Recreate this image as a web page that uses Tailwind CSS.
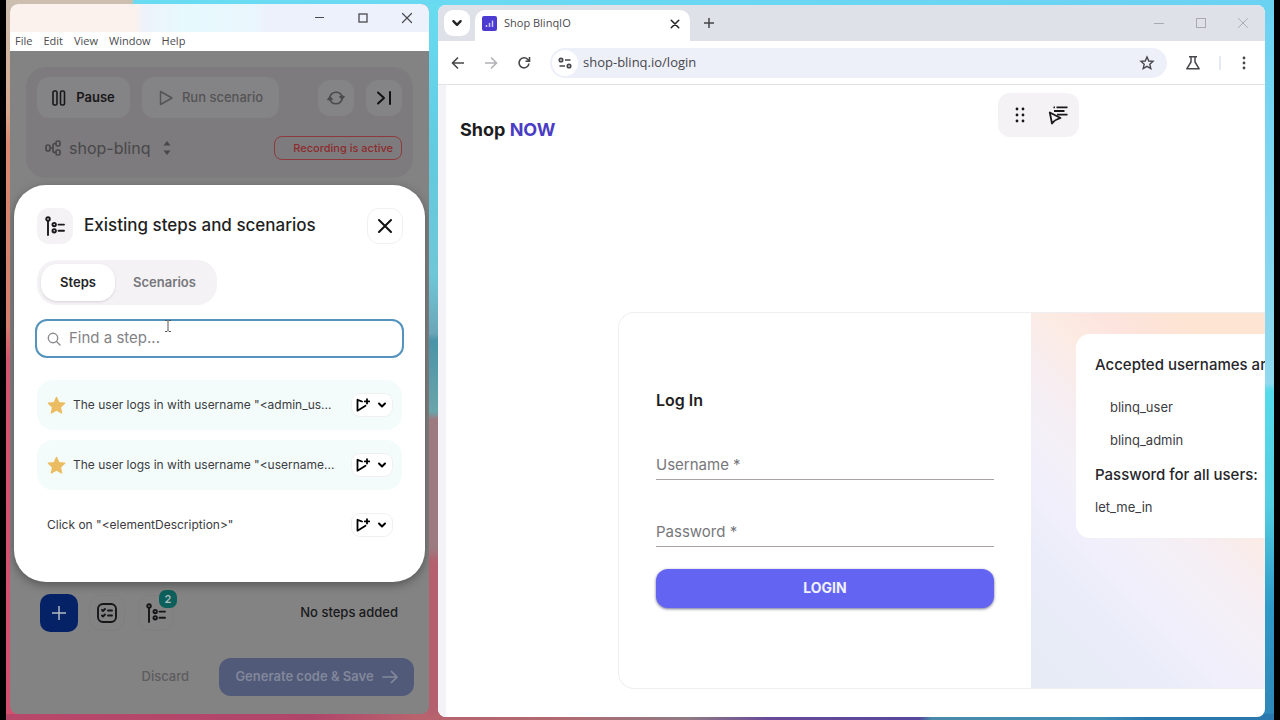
<!DOCTYPE html>
<html lang="en">
<head>
<meta charset="utf-8">
<meta name="viewport" content="width=device-width, initial-scale=1">
<title>Shop BlinqIO</title>
<script src="https://cdn.jsdelivr.net/npm/@tailwindcss/browser@4"></script>
</head>
<body class="bg-black font-['Inter',sans-serif] text-[#1f1f23]">
<svg class="hidden" aria-hidden="true">
  <symbol id="i-steps" viewBox="0 0 20 20" fill="none" stroke="currentColor" stroke-width="1.900" stroke-linecap="round"><circle cx="3" cy="3" r="1.800"/><path d="M3 5v14"/><circle cx="9.200" cy="8.600" r="1.700"/><circle cx="9.200" cy="14.800" r="1.700"/><path d="M13.500 8.600H19M13.500 14.800H19"/></symbol>
  <symbol id="i-runadd" viewBox="0 0 16 16" fill="none" stroke="currentColor" stroke-width="1.800" stroke-linecap="round" stroke-linejoin="round"><path d="M7 4.500 2.500 2.800v10.900L10.500 8.800"/><path d="M12 2.200v4.400M9.800 4.400h4.400"/></symbol>
  <symbol id="i-chev" viewBox="0 0 10 10" fill="none" stroke="currentColor" stroke-width="2" stroke-linecap="round" stroke-linejoin="round"><path d="M2 3.500 5 6.500 8 3.500"/></symbol>
  <symbol id="i-x" viewBox="0 0 16 16" fill="none" stroke="currentColor" stroke-linecap="round"><path d="M2 2l12 12M14 2 2 14"/></symbol>
  <symbol id="i-star" viewBox="0 0 20 20" fill="#ecbc62" stroke="#ecbc62" stroke-width="1.500" stroke-linejoin="round"><path d="M10 1.500l2.500 5.600 6 .6-4.500 4.100 1.300 6L10 14.700 4.700 17.800 6 11.800 1.500 7.700l6-.6z"/></symbol>
</svg>

<main class="relative mx-[6px] flex h-screen min-h-[720px] gap-[9px] overflow-hidden bg-[linear-gradient(to_right,#cdbfb0_0_127px,#69dcf2_127px,#6cd2f2)] pt-1 pr-[9px] pb-[3px] pl-1">
  <!-- Wallpaper visible around the windows -->
  <div class="absolute inset-y-1 left-0 w-10 bg-[linear-gradient(#cdbfb0,#d9a98c_15%,#d98a70_20%,#d5806c_45%,#d5566f_50%,#d5506f)]"></div>
  <div class="absolute top-1 bottom-0 left-[400px] w-12 bg-[linear-gradient(#69dcf2,#62cbe0_20%,#6fc6d6_38%,#6aa6b8_46%,#4a93a8_47%,#6aa5aa_57%,#9c7a80_58%,#9c7a80_76%,#b5606e_78%,#b5606e)]"></div>
  <div class="absolute top-1 right-0 bottom-0 w-10 bg-[linear-gradient(#6cd2f2,#90d8ee_53%,#55dbea_54%,#53cde2_70%,#2f9ac8_84%,#2f86b8)]"></div>
  <div class="absolute inset-x-0 bottom-0 h-1.5 bg-[linear-gradient(to_right,#b8486a,#b0456a_24%,#b8626e_32%,#b06a70_44%,#8f7a84_54%,#6a4a98_60%,#56489c_72%,#4a8aa8_73%,#3f8fb4_86%,#2a78ae_90%)]"></div>

  <!-- Recorder window -->
  <section class="relative mb-[3px] flex w-[419px] shrink-0 flex-col overflow-hidden rounded-lg bg-[#838384]">
    <header class="flex h-7 shrink-0 items-center justify-end gap-8 bg-[linear-gradient(to_right,#fbf2ee_0_30%,#eef2fb_32%,#e6fafe_42%,#eaf6fd_58%,#edf1fb_62%)] pr-4 text-[#4a4a4e]">
      <button aria-label="Minimize"><svg class="size-3" viewBox="0 0 12 12" fill="none" stroke="currentColor"><path d="M2 5.500h9"/></svg></button>
      <button aria-label="Maximize"><svg class="size-3" viewBox="0 0 12 12" fill="none" stroke="currentColor" stroke-width="1.300"><rect x="2" y="2" width="8" height="8"/></svg></button>
      <button aria-label="Close"><svg class="size-3 stroke-[1.6]"><use href="#i-x"/></svg></button>
    </header>
    <nav class="flex h-[19px] shrink-0 items-center gap-[11px] bg-white px-[5px] font-['Open_Sans',sans-serif] text-[11px] text-[#4b4b4f]">
      <button>File</button><button>Edit</button><button>View</button><button>Window</button><button>Help</button>
    </nav>

    <div class="flex grow flex-col px-4 pt-4 pb-[18px]">
      <div class="flex h-[111px] shrink-0 flex-col gap-[17px] rounded-[20px] bg-[#7e7b7e] px-[11px] pt-2.5">
        <div class="flex items-center gap-3">
          <button class="flex h-[41px] w-[93px] items-center justify-center gap-2.5 rounded-xl bg-[#848385] text-[13px] font-semibold text-[#18181a]">
            <svg class="h-4 w-3.5" viewBox="0 0 14 16" fill="none" stroke="currentColor" stroke-width="1.600"><rect x="1" y="1" width="4" height="14" rx="1.500"/><rect x="8.500" y="1" width="4" height="14" rx="1.500"/></svg>Pause</button>
          <button class="flex h-[41px] w-[137px] items-center justify-center gap-2 rounded-xl bg-[#848385] text-[13px] font-medium text-[#545456]">
            <svg class="h-4 w-4" viewBox="0 0 16 16" fill="none" stroke="currentColor" stroke-width="1.500" stroke-linejoin="round"><path d="M2.500 1.500v13L14 8z"/></svg>Run scenario</button>
          <button aria-label="Refresh" class="ml-auto flex size-9 items-center justify-center rounded-xl bg-[#848385] text-[#4b4b4d]">
            <svg class="size-5" viewBox="0 0 20 20" fill="none" stroke="currentColor" stroke-width="1.700" stroke-linecap="round" stroke-linejoin="round"><path d="M4 8.500a6.500 6.500 0 0 1 12-.5M16 11.500a6.500 6.500 0 0 1-12 .5"/><path fill="currentColor" d="M14 8.500h4L16 11zM2 11.500h4L4 9z"/></svg></button>
          <button aria-label="Skip to end" class="flex size-9 items-center justify-center rounded-xl bg-[#848385] text-[#111]">
            <svg class="size-4" viewBox="0 0 16 16" fill="none" stroke="currentColor" stroke-width="2" stroke-linecap="round" stroke-linejoin="round"><path d="M2 2.500 8 8 2 13.500M14 2v12"/></svg></button>
        </div>
        <div class="flex h-[26px] items-center gap-2 pl-2 text-[#48484a]">
          <svg class="size-4" viewBox="0 0 16 16" fill="none" stroke="currentColor" stroke-width="1.700"><rect x="1" y="5" width="4" height="6" rx="2"/><rect x="11" y="1" width="4" height="5" rx="1.500"/><rect x="11" y="10" width="4" height="5" rx="1.500"/><path d="M5 8h3M11 3.500h-1a2 2 0 0 0-2 2v5a2 2 0 0 0 2 2h1"/></svg>
          <button class="flex items-center gap-3 text-base"><span>shop-blinq</span>
            <svg class="h-4 w-2.5" viewBox="0 0 8 16" fill="currentColor"><path d="M4 1l3.500 4.500h-7zM4 15l3.500-4.500h-7z"/></svg></button>
          <span class="ml-auto flex h-6 items-center rounded-lg border border-[#8f3a3a] pr-2 pl-[18px] text-[11px] font-medium text-[#8c2c2c]">Recording is active</span>
        </div>
      </div>

      <div class="mt-auto flex items-center gap-[11px] pl-[14px] pr-[15px]">
        <button aria-label="Add step" class="flex size-[38px] items-center justify-center rounded-[10px] bg-[#062266] text-[#b4b9c4]"><svg class="size-4" viewBox="0 0 16 16" stroke="currentColor" stroke-width="1.500"><path d="M8 1v14M1 8h14"/></svg></button>
        <button aria-label="Checklist" class="flex size-9 items-center justify-center rounded-xl border border-[#7f7f80] text-[#161618]"><svg class="size-5 shrink-0" viewBox="0 0 20 20" fill="none" stroke="currentColor" stroke-width="1.900" stroke-linecap="round" stroke-linejoin="round"><rect x="1" y="1" width="18" height="18" rx="5"/><path d="M5 7l1 1 2-2M5 12.500l1 1 2-2M11 7.500h4M11 12.500h4"/></svg></button>
        <button aria-label="Existing steps, 2" class="relative ml-0.5 flex size-9 items-center justify-center rounded-xl border border-[#7f7f80] text-[#161618]"><svg class="size-5 shrink-0"><use href="#i-steps"/></svg>
          <span class="absolute -top-1.5 -right-1 flex size-[18px] items-center justify-center rounded-[7px] bg-[#0d5f5b] text-[11px] font-semibold text-[#a9bdbd]">2</span></button>
        <p class="ml-auto text-[13px] font-medium text-[#19191b]">No steps added</p>
      </div>
      <div class="mt-[26px] -mr-px flex items-center justify-end">
        <button class="mr-[30px] text-[13px] font-medium text-[#5c5c5e]">Discard</button>
        <button class="flex h-[38px] w-[195px] items-center justify-center gap-2 rounded-xl bg-[#515a78] text-[13px] font-semibold text-[#82889b]">Generate code &amp; Save
          <svg class="h-4 w-4" viewBox="0 0 16 16" fill="none" stroke="currentColor" stroke-width="1.700" stroke-linecap="round" stroke-linejoin="round"><path d="M1 8h14M9.500 2.500 15 8l-5.500 5.500"/></svg></button>
      </div>
    </div>

    <!-- Steps dialog -->
    <div role="dialog" aria-label="Existing steps and scenarios" class="absolute inset-x-1 top-[181px] rounded-[32px] bg-white px-[23px] pt-[23px] pb-8 shadow-[0_3px_10px_rgba(0,0,0,0.35)]">
      <div class="flex items-center">
        <span class="flex size-9 items-center justify-center rounded-xl bg-[#f4f2f5] text-[#1a1a1c]"><svg class="size-5"><use href="#i-steps"/></svg></span>
        <h2 class="ml-[11px] text-[17px] font-medium">Existing steps and scenarios</h2>
        <button aria-label="Close dialog" class="-mr-px ml-auto flex size-9 items-center justify-center rounded-xl border border-[#f1f0f2] text-[#111]"><svg class="size-4 shrink-0 stroke-2"><use href="#i-x"/></svg></button>
      </div>
      <div class="mt-4 flex w-[180px] gap-[18px] rounded-[20px] bg-[#f4f2f5] p-1 text-[13px] font-semibold">
        <button class="h-[37px] w-[74px] rounded-2xl bg-white text-[#232327] shadow">Steps</button>
        <button class="text-[#77777b]">Scenarios</button>
      </div>
      <div class="-mx-0.5 mt-[14px] flex h-[39px] items-center gap-2 rounded-xl border-2 border-[#5493bd] px-2.5">
        <svg class="size-3.5 shrink-0 text-[#8c8c90]" viewBox="0 0 14 14" fill="none" stroke="currentColor" stroke-width="1.400" stroke-linecap="round"><circle cx="6" cy="6" r="4.700"/><path d="M9.500 9.500 13 13"/></svg>
        <input aria-label="Find a step" placeholder="Find a step..." class="min-w-0 grow text-[15px] outline-none placeholder:text-[#838388]">
      </div>
      <ul class="mt-[22px] flex flex-col gap-[10px] text-xs text-[#3b3b40]">
        <li class="flex h-[50px] items-center rounded-2xl bg-[#f3fcfb] pr-2.5 pl-2.5">
          <svg class="mr-[7px] size-[19px] shrink-0"><use href="#i-star"/></svg><span class="grow whitespace-nowrap">The user logs in with username "&lt;admin_us...</span>
          <button aria-label="Run step" class="flex h-[22px] w-10 shrink-0 items-center gap-1.5 rounded-lg bg-white pl-[3px] text-black shadow-[0_0_0_1px_#f0f0f2]"><svg class="size-4"><use href="#i-runadd"/></svg><svg class="size-2.5"><use href="#i-chev"/></svg></button></li>
        <li class="flex h-[50px] items-center rounded-2xl bg-[#f3fcfb] pr-2.5 pl-2.5">
          <svg class="mr-[7px] size-[19px] shrink-0"><use href="#i-star"/></svg><span class="grow whitespace-nowrap">The user logs in with username "&lt;username...</span>
          <button aria-label="Run step" class="flex h-[22px] w-10 shrink-0 items-center gap-1.5 rounded-lg bg-white pl-[3px] text-black shadow-[0_0_0_1px_#f0f0f2]"><svg class="size-4"><use href="#i-runadd"/></svg><svg class="size-2.5"><use href="#i-chev"/></svg></button></li>
        <li class="flex h-[50px] items-center rounded-2xl pr-2.5 pl-2.5">
          <span class="grow whitespace-nowrap">Click on "&lt;elementDescription&gt;"</span>
          <button aria-label="Run step" class="flex h-[22px] w-10 shrink-0 items-center gap-1.5 rounded-lg bg-white pl-[3px] text-black shadow-[0_0_0_1px_#f0f0f2]"><svg class="size-4"><use href="#i-runadd"/></svg><svg class="size-2.5"><use href="#i-chev"/></svg></button></li>
      </ul>
      <!-- Text pointer -->
      <svg class="absolute top-[135px] left-[150px] h-3 w-2 text-[#555]" viewBox="0 0 8 12" fill="none" stroke="currentColor"><path d="M1 .5h2l1 1 1-1h2M4 1.500v9M1 11.500h2l1-1 1 1h2"/></svg>
    </div>
  </section>

  <!-- Browser window -->
  <section class="relative mt-px flex min-w-0 grow flex-col overflow-hidden rounded-lg bg-white">
    <header class="flex h-9 shrink-0 items-end bg-[#dfe1e9] pl-1.5">
      <button aria-label="Search tabs" class="mb-[5px] flex size-[26px] items-center justify-center rounded-[9px] bg-white text-[#222]"><svg class="size-3"><use href="#i-chev"/></svg></button>
      <div class="ml-[5px] flex h-[31px] w-[215px] items-center rounded-t-[10px] bg-white pb-1 pl-[7px] pr-2.5">
        <svg class="size-[15px]" viewBox="0 0 15 15"><rect width="15" height="15" rx="2" fill="#4b3bd0"/><path d="M4.500 9v2M7.500 7v4M10.500 4.500V11" stroke="#cfc9f8" stroke-width="1.500"/></svg>
        <span class="ml-[7px] font-['Open_Sans',sans-serif] text-[11px] text-[#4a4a4e]">Shop BlinqIO</span>
        <button aria-label="Close tab" class="ml-auto text-[#222]"><svg class="size-2.5 stroke-[2.4]"><use href="#i-x"/></svg></button>
      </div>
      <button aria-label="New tab" class="mb-[13px] ml-[14px] text-[#444]"><svg class="size-2.5" viewBox="0 0 10 10" stroke="currentColor" stroke-width="1.500"><path d="M5 0v10M0 5h10"/></svg></button>
      <div class="mr-4 mb-3 ml-auto flex gap-[30px] text-[#a9abb0]">
        <button aria-label="Minimize"><svg class="size-3" viewBox="0 0 12 12" fill="none" stroke="currentColor"><path d="M1 6.500h10"/></svg></button>
        <button aria-label="Maximize"><svg class="size-3" viewBox="0 0 12 12" fill="none" stroke="currentColor"><rect x="1.500" y="1.500" width="9" height="9"/></svg></button>
        <button aria-label="Close"><svg class="size-3 stroke-[1.3]"><use href="#i-x"/></svg></button>
      </div>
    </header>
    <div class="flex h-11 shrink-0 items-center border-b border-[#e2e2e5] pr-[18px] pl-[13px] text-[#47474b]">
      <button aria-label="Back"><svg class="size-3.5" viewBox="0 0 14 14" fill="none" stroke="currentColor" stroke-width="1.600"><path d="M13 7H2M7 1.500 1.500 7 7 12.500"/></svg></button>
      <button aria-label="Forward" class="ml-[19px] text-[#b2b2b6]"><svg class="size-3.5" viewBox="0 0 14 14" fill="none" stroke="currentColor" stroke-width="1.600"><path d="M1 7h11M7 1.500 12.500 7 7 12.500"/></svg></button>
      <button aria-label="Reload" class="ml-[19px]"><svg class="size-3.5" viewBox="0 0 14 14" fill="none" stroke="currentColor" stroke-width="1.600"><path d="M12 7.500A5 5 0 1 1 10.800 3.500L12.500 5M12.500 1v4.200H8.500"/></svg></button>
      <div class="ml-[19px] flex h-[30px] min-w-0 grow items-center rounded-full bg-[#edeff9] pr-3 pl-0.5">
        <button aria-label="Site information" class="flex size-[26px] shrink-0 items-center justify-center rounded-full bg-white"><svg class="h-3 w-3.5 shrink-0" viewBox="0 0 14 12" fill="none" stroke="currentColor" stroke-width="1.700"><circle cx="3" cy="3" r="1.700"/><path d="M7 3h5.500M1.500 9H7"/><circle cx="11" cy="9" r="1.700"/></svg></button>
        <input aria-label="Address" value="shop-blinq.io/login" class="ml-[5px] min-w-0 grow bg-transparent font-['Open_Sans',sans-serif] text-[13px] outline-none">
        <button aria-label="Bookmark"><svg class="size-4" viewBox="0 0 16 16" fill="none" stroke="currentColor" stroke-width="1.400"><path d="M8 2l1.800 4 4.200.4-3.200 2.900 1 4.300L8 11.300l-3.800 2.300 1-4.300L2 6.400 6.200 6z"/></svg></button>
      </div>
      <button aria-label="Experiments" class="ml-[18px]"><svg class="size-4" viewBox="0 0 16 16" fill="none" stroke="currentColor" stroke-width="1.500" stroke-linejoin="round"><path d="M4 1.700h8M6 2v5L1.800 13.800h12.400L10 7V2"/></svg></button>
      <span class="ml-[18px] h-3.5 w-0.5 bg-[#e6e8f6]"></span>
      <button aria-label="Menu" class="ml-5"><svg class="h-3.5 w-1.5" viewBox="0 0 6 14" fill="currentColor"><circle cx="3" cy="2" r="1.400"/><circle cx="3" cy="7" r="1.400"/><circle cx="3" cy="12" r="1.400"/></svg></button>
    </div>

    <div class="relative flex min-h-0 grow flex-col overflow-hidden border-l-8 border-[#f4f4f8] pt-8 pb-7">
      <a href="#" class="ml-3.5 text-lg/[26px] font-bold text-[#1c1c20]">Shop <span class="text-[#4a3cc4]">NOW</span></a>
      <div class="absolute top-2 right-[186px] flex h-11 w-[81px] items-center gap-[22px] rounded-xl bg-[#f4f2f5] pl-4 text-[#18181b]">
        <button aria-label="Move toolbar"><svg class="h-4 w-3" viewBox="0 0 12 16" fill="currentColor"><circle cx="3" cy="2" r="1.400"/><circle cx="9" cy="2" r="1.400"/><circle cx="3" cy="8" r="1.400"/><circle cx="9" cy="8" r="1.400"/><circle cx="3" cy="14" r="1.400"/><circle cx="9" cy="14" r="1.400"/></svg></button>
        <button aria-label="Pick element"><svg class="size-5" viewBox="0 0 20 20" fill="none" stroke="currentColor" stroke-width="1.800" stroke-linejoin="round"><path d="M5.500 2.300h1.500M8.500 2.300H19.500M6 6h10.500M9 9.700h10.500"/><path fill="#f4f2f5" d="M1.800 7.500 4 18.500Q7 14.500 12.500 13z"/></svg></button>
      </div>

      <div class="mt-auto ml-[172px] flex h-[377px] shrink-0 rounded-l-2xl border border-r-0 border-[#efeff1]">
        <form class="flex min-w-0 grow flex-col px-[37px] pt-[75px]">
          <h1 class="text-base/6 font-semibold">Log In</h1>
          <input type="text" required aria-label="Username" placeholder="Username *" class="mt-[38px] h-[30px] border-b border-[#a9a3a6] text-[15px] outline-none placeholder:text-[#77777b]">
          <input type="password" required aria-label="Password" placeholder="Password *" class="mt-[37px] h-[30px] border-b border-[#a9a3a6] text-[15px] outline-none placeholder:text-[#77777b]">
          <button class="mt-[22px] h-[39px] rounded-xl bg-[#6364f1] pb-0.5 text-[14px] font-bold text-[#f1f1ff] shadow-[0_1px_3px_rgba(50,50,100,0.7)]">LOGIN</button>
        </form>
        <aside class="w-[234px] shrink-0 overflow-hidden bg-[linear-gradient(225deg,#fde4d3_15%,#fde4de_27%,#fcebe2_35%,#f7edf0_46%,#f3f0f7_56%,#f1effb_66%,#eaedf9_76%,#e6ebf5)] pt-[21px] pl-[45px]">
          <div class="w-[322px] rounded-[14px] bg-white px-[19px] pt-[19px] pb-[14px] text-[13px] text-[#3c3c42]">
            <h2 class="text-[15px]/6 font-medium text-[#26262b]">Accepted usernames are:</h2>
            <ul class="mt-[14px] pl-[15px]"><li class="leading-[33px]">blinq_user</li><li class="leading-[33px]">blinq_admin</li></ul>
            <h2 class="mt-[6px] text-[15px]/6 font-medium text-[#26262b]">Password for all users:</h2>
            <p class="mt-1 leading-[33px]">let_me_in</p>
          </div>
        </aside>
      </div>
    </div>
  </section>
</main>
</body>
</html>
